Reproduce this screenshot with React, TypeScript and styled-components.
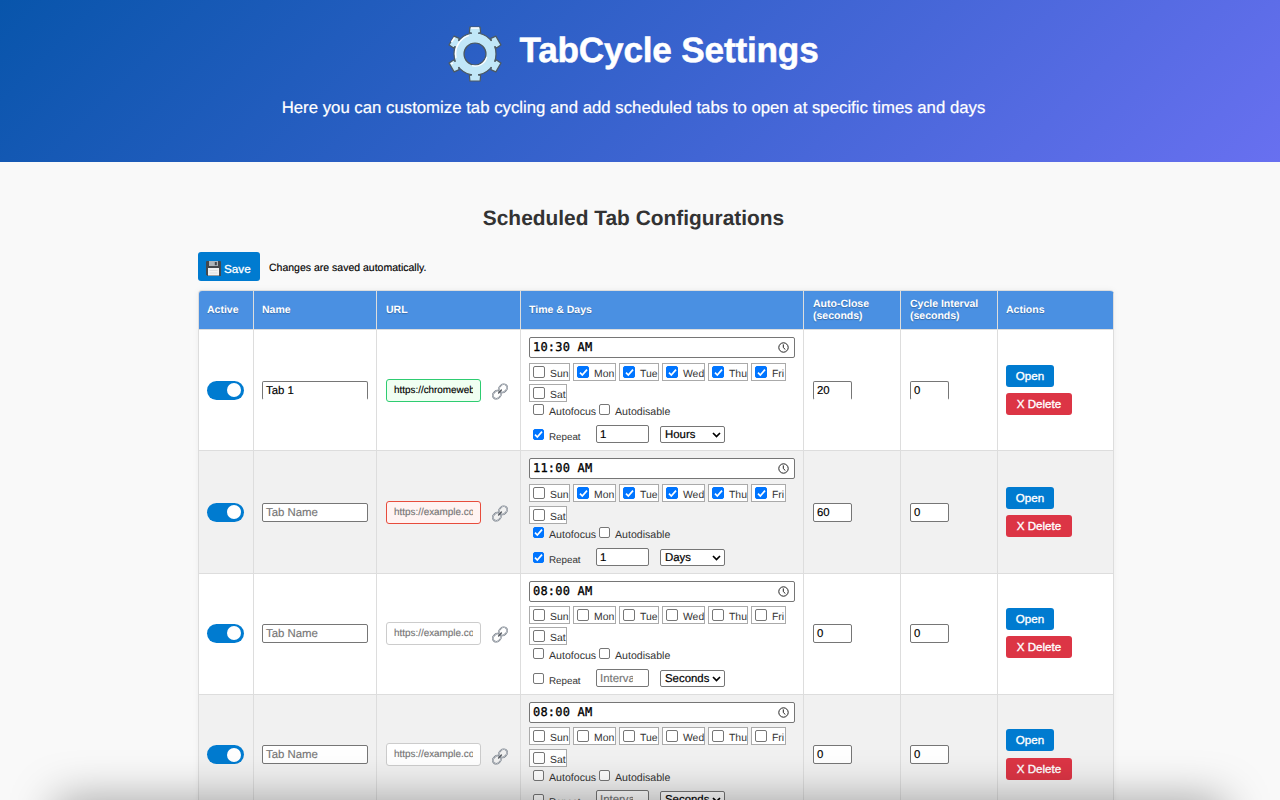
import React from "react";
import styled, { createGlobalStyle, css } from "styled-components";

const GlobalStyle = createGlobalStyle`
  * { box-sizing: border-box; }
  html, body { margin: 0; height: 800px; overflow: hidden; }
  body {
    background: #f9f9f9;
    font-family: "Liberation Sans", Arial, sans-serif;
    color: #000;
    text-rendering: geometricPrecision;
  }
`;

const Page = styled.div`
  position: relative;
  width: 1280px;
  height: 800px;
  overflow: hidden;
`;

const Header = styled.header`
  height: 162px;
  padding: 25px 13px 0 0;
  display: flex;
  flex-direction: column;
  align-items: center;
  color: #fff;
  background: linear-gradient(135deg, #0855ab 0%, #6870f0 100%);
`;

const TitleRow = styled.div`
  display: flex;
  align-items: flex-start;
  height: 60px;
  gap: 17px;
`;

const Title = styled.h1`
  margin: 5px 0 0;
  font-size: 35.2px;
  line-height: 41px;
  letter-spacing: -0.2px;
  white-space: nowrap;
  -webkit-text-stroke: 0.5px #fff;
`;

const Subtitle = styled.p`
  margin: 13px 0 0;
  font-size: 16.78px;
  line-height: 20px;
  white-space: nowrap;
  -webkit-text-stroke: 0.2px #fff;
`;

const Main = styled.main`
  padding-left: 198px;
`;

const SectionTitle = styled.h2`
  margin: 0;
  padding: 44px 0 21px;
  width: 871px;
  text-align: center;
  font-size: 20.9px;
  line-height: 25px;
  color: #333;
`;

const SaveRow = styled.div`
  display: flex;
  align-items: center;
  height: 29px;
  gap: 9px;
  margin-bottom: 9px;
`;

const SaveButton = styled.button`
  display: flex;
  align-items: center;
  width: 62px;
  height: 29px;
  padding: 3px 0 0 8px;
  gap: 3px;
  border: 0;
  border-radius: 3px;
  background: #007bd0;
  color: #fff;
  font: 11.7px/13px "Liberation Sans", Arial, sans-serif;
  -webkit-text-stroke: 0.3px #fff;
`;

const SaveNote = styled.span`
  padding-top: 2px;
  font-size: 10.5px;
  -webkit-text-stroke: 0.15px #000;
`;

const Table = styled.div`
  width: 916px;
  border: 1px solid #ddd;
  border-right: 0;
  border-radius: 4px 4px 0 0;
  box-shadow: 0 0 6px rgba(0, 0, 0, 0.05);
  overflow: hidden;
`;

const Cell = styled.div<{ $inset?: number }>`
  display: flex;
  align-items: center;
  padding-left: ${(p) => p.$inset ?? 8}px;
  border-right: 1px solid #ddd;
  border-bottom: 1px solid #ddd;
`;

const Row = styled.div<{ $height: number; $striped?: boolean; $head?: boolean; $raised?: boolean }>`
  display: grid;
  grid-template-columns: 55px 123px 144px 283px 97px 97px 116px;
  height: ${(p) => p.$height}px;
  background: ${(p) => (p.$head ? "#4a90e2" : p.$striped ? "#f1f1f1" : "#fff")};
  ${Cell} {
    padding-bottom: ${(p) => (p.$raised ? 2 : 0)}px;
  }
`;

const HeadCell = styled(Cell)`
  font-size: 10.5px;
  line-height: 12px;
  font-weight: bold;
  color: #fff;
  white-space: pre-line;
  text-shadow: 0 1px 1px rgba(0, 0, 0, 0.25);
`;

const Actions = styled.div<{ $top: number; $gap: number }>`
  align-self: flex-start;
  display: flex;
  flex-direction: column;
  padding-top: ${(p) => p.$top}px;
  gap: ${(p) => p.$gap}px;
`;

const Toggle = styled.span`
  display: flex;
  justify-content: flex-end;
  align-items: center;
  width: 37px;
  height: 19px;
  padding-right: 3px;
  border-radius: 10px;
  background: #007bd0;
`;

const Knob = styled.span`
  width: 14px;
  height: 14px;
  border-radius: 50%;
  background: #fff;
`;

const Field = styled.div<{ $width: number; $muted?: boolean; $open?: boolean; $height?: number }>`
  width: ${(p) => p.$width}px;
  height: ${(p) => p.$height ?? 19}px;
  padding: 0 3px;
  border: 1px solid #767676;
  border-radius: 2px;
  background: #fff;
  color: ${(p) => (p.$muted ? "#757575" : "#000")};
  font-size: 11.4px;
  line-height: ${(p) => p.$height ?? 19}px;
  white-space: nowrap;
  overflow: hidden;
  -webkit-text-stroke: 0.15px;
  ${(p) => p.$open && css`border-bottom-color: transparent;`}
`;

type UrlState = "ok" | "bad" | "idle";

const urlColors = {
  ok: css`border-color: #2ecc71; background: #f0fff2; color: #000;`,
  bad: css`border-color: #e74c3c; background: #fff3f2; color: #757575;`,
  idle: css`border-color: #ccc; background: #fff; color: #757575;`,
};

const UrlField = styled.div<{ $state: UrlState }>`
  width: 95px;
  height: 23px;
  padding: 0 7px;
  margin: 0 11px 0 1px;
  border: 1px solid;
  border-radius: 3px;
  font-size: 9.9px;
  line-height: 22px;
  -webkit-text-stroke: 0.15px;
  ${(p) => urlColors[p.$state]}
`;

const UrlText = styled.div`
  overflow: hidden;
  white-space: nowrap;
`;

const Schedule = styled.div`
  align-self: flex-start;
  padding-top: 7px;
`;

const TimeField = styled.div`
  display: flex;
  align-items: center;
  justify-content: space-between;
  width: 266px;
  height: 21px;
  padding: 0 5px 0 3px;
  border: 1px solid #767676;
  border-radius: 2px;
  background: #fff;
  font-family: "DejaVu Sans Mono", monospace;
  font-size: 12px;
  line-height: 17px;
  letter-spacing: 0.2px;
  -webkit-text-stroke: 0.3px #000;
`;

const Days = styled.div<{ $top: number; $gap: number }>`
  display: flex;
  flex-wrap: wrap;
  gap: ${(p) => p.$gap}px 3px;
  padding-top: ${(p) => p.$top}px;
  width: 268px;
`;

const Day = styled.label<{ $width: number }>`
  display: flex;
  width: ${(p) => p.$width}px;
  height: 18px;
  padding: 2px 0 0 3px;
  gap: 5px;
  border: 1px solid #aaa;
  background: #fff;
  color: #333;
  font-size: 10.4px;
  line-height: 18px;
  white-space: nowrap;
`;

const Box = styled.span<{ $on?: boolean; $size?: number }>`
  display: inline-flex;
  align-items: center;
  justify-content: center;
  flex: none;
  width: ${(p) => p.$size ?? 11}px;
  height: ${(p) => p.$size ?? 11}px;
  border: 1px solid ${(p) => (p.$on ? "#0075ff" : "#767676")};
  border-radius: 2px;
  background: ${(p) => (p.$on ? "#0075ff" : "#fff")};
`;

const Options = styled.div<{ $top: number }>`
  display: flex;
  height: ${(p) => p.$top + 16}px;
  padding: ${(p) => p.$top}px 0 0 4px;
  font-size: 10.6px;
  line-height: 17px;
  color: #333;
`;

const OptionLabel = styled.span<{ $width: number }>`
  width: ${(p) => p.$width}px;
  padding-left: 5px;
  white-space: nowrap;
`;

const RepeatRow = styled.div<{ $top: number }>`
  display: flex;
  align-items: flex-start;
  padding: ${(p) => p.$top}px 0 0 4px;
`;

const RepeatBox = styled.div`
  display: flex;
  width: 63px;
  padding-top: 4px;
  gap: 5px;
  font-size: 9.8px;
  line-height: 17px;
  color: #333;
`;

const IntervalText = styled.div<{ $clip: boolean }>`
  width: ${(p) => (p.$clip ? "33px" : "auto")};
  overflow: hidden;
`;

const Select = styled.div`
  display: flex;
  align-items: center;
  justify-content: space-between;
  width: 65px;
  height: 17px;
  margin: 1px 0 0 11px;
  padding: 0 3px 0 4px;
  border: 1px solid #767676;
  border-radius: 2px;
  background: #fff;
  font-size: 11.4px;
  -webkit-text-stroke: 0.2px #000;
`;

const ActionButton = styled.button<{ $danger?: boolean }>`
  width: ${(p) => (p.$danger ? 66 : 48)}px;
  height: 22px;
  padding: 0 0 2px;
  border: 0;
  border-radius: 3px;
  background: ${(p) => (p.$danger ? "#dc3545" : "#007bd0")};
  color: #fff;
  font: 11.6px "Liberation Sans", Arial, sans-serif;
  -webkit-text-stroke: 0.35px #fff;
`;

const BottomShade = styled.div`
  position: absolute;
  left: 70px;
  right: 70px;
  top: 814px;
  height: 40px;
  box-shadow: 0 0 46px 14px rgba(0, 0, 0, 0.36);
`;

const Check = ({ on, size }: { on?: boolean; size?: number }) => (
  <Box $on={on} $size={size}>
    {on && (
      <svg width="9" height="9" viewBox="0 0 9 9" fill="none" stroke="#fff" strokeWidth="1.7">
        <path d="M1 4.7 3.3 7 8 1.6" />
      </svg>
    )}
  </Box>
);

const toothAngles = [0, 60, 120, 180, 240, 300];

const Gear = () => (
  <svg width="54" height="58" viewBox="-27 -29 54 58">
    <g fill="#c1e7f8" stroke="#4d5960" strokeWidth="1.2" strokeLinejoin="round">
      {toothAngles.map((a) => (
        <path key={a} transform={`rotate(${a})`} d="M-3.6-18-3.6-21-5.6-21.5-5.1-27 5.1-27 5.6-21.5 3.6-21 3.6-18Z" />
      ))}
      <path fillRule="evenodd" d="M0-21A21 21 0 1 1 0 21 21 21 0 1 1 0-21ZM0-11A11 11 0 1 0 0 11 11 11 0 1 0 0-11Z" />
    </g>
    <g fill="#c1e7f8">
      {toothAngles.map((a) => (
        <rect key={a} x="-3" y="-22.3" width="6" height="5" transform={`rotate(${a})`} />
      ))}
    </g>
    <path d="M-19 4A19.5 19.5 0 0 1-6-18.6M-4-26 4-26M-23.5-12-20.5-16.5M-24 10-22 9" fill="none" stroke="#fff" strokeWidth="1.5" />
    <path d="M11.8 3A12 12 0 0 1-3 11.6" fill="none" stroke="#fff" strokeWidth="1.2" />
  </svg>
);

const Floppy = () => (
  <svg width="15" height="15" viewBox="0 0 15 15">
    <path d="M0 1Q0 0 1 0H14Q15 0 15 1V15H1.5L0 13.5Z" fill="#45484d" />
    <rect x="3" width="9" height="5" fill="#aeb4b9" />
    <rect x="8.8" y="1" width="2" height="3.2" fill="#44484e" />
    <rect x="2" y="7" width="11" height="7.5" fill="#f2f2f2" />
    <path d="M3.5 9.5h8M3.5 12h8" stroke="#d5d7d9" strokeWidth=".7" />
  </svg>
);

const ChainSvg = styled.svg<{ $lowered?: boolean }>`
  margin-top: ${(p) => (p.$lowered ? 3 : 2)}px;
`;

const Chain = ({ lowered }: { lowered?: boolean }) => (
  <ChainSvg $lowered={lowered} width="16" height="17" viewBox="0 0 16 17" fill="none">
    <g transform="rotate(-46 8 8.5)">
      <rect x="-.8" y="5" width="8.8" height="7" rx="3.5" stroke="#747b84" strokeWidth="1.6" />
      <rect x="-.8" y="5" width="8.8" height="7" rx="3.5" stroke="#c9ced5" strokeWidth=".8" />
      <rect x="8" y="5" width="8.8" height="7" rx="3.5" stroke="#747b84" strokeWidth="1.6" />
      <rect x="8" y="5" width="8.8" height="7" rx="3.5" stroke="#c9ced5" strokeWidth=".8" />
      <path d="M6 8.5h4" stroke="#55595f" strokeWidth="1.4" strokeLinecap="round" />
    </g>
  </ChainSvg>
);

const Clock = () => (
  <svg width="11" height="11" viewBox="0 0 11 11" fill="none" stroke="#222" strokeWidth="1">
    <circle cx="5.5" cy="5.5" r="4.7" />
    <path d="M5.3 2.4V5.6L7.4 7.6" />
  </svg>
);

const Chevron = () => (
  <svg width="9" height="6" viewBox="0 0 9 6" fill="none" stroke="#000" strokeWidth="1.7">
    <path d="M1 1 4.5 4.5 8 1" />
  </svg>
);

const dayWidths: [string, number][] = [
  ["Sun", 41], ["Mon", 43], ["Tue", 40], ["Wed", 43], ["Thu", 40], ["Fri", 35], ["Sat", 38],
];

interface Spacing {
  height: number;
  daysTop: number;
  daysGap: number;
  optionsTop: number;
  repeatTop: number;
  actionsTop: number;
  actionsGap: number;
  raised?: boolean;
}

interface TabConfig {
  name?: string;
  url?: string;
  urlState: UrlState;
  time: string;
  weekdays?: boolean;
  autofocus?: boolean;
  interval?: string;
  unit: string;
  autoClose: string;
  spacing: Spacing;
}

const tabs: TabConfig[] = [
  {
    name: "Tab 1", url: "https://chromewebstore", urlState: "ok", time: "10:30 AM", weekdays: true,
    interval: "1", unit: "Hours", autoClose: "20",
    spacing: { height: 121, daysTop: 5, daysGap: 3, optionsTop: 2, repeatTop: 5, actionsTop: 35, actionsGap: 6 },
  },
  {
    urlState: "bad", time: "11:00 AM", weekdays: true, autofocus: true,
    interval: "1", unit: "Days", autoClose: "60",
    spacing: { height: 123, daysTop: 5, daysGap: 4, optionsTop: 3, repeatTop: 5, actionsTop: 36, actionsGap: 6 },
  },
  {
    urlState: "idle", time: "08:00 AM", unit: "Seconds", autoClose: "0",
    spacing: { height: 121, daysTop: 4, daysGap: 3, optionsTop: 3, repeatTop: 5, actionsTop: 34, actionsGap: 6, raised: true },
  },
  {
    urlState: "idle", time: "08:00 AM", unit: "Seconds", autoClose: "0",
    spacing: { height: 122, daysTop: 4, daysGap: 4, optionsTop: 3, repeatTop: 4, actionsTop: 34, actionsGap: 7, raised: true },
  },
];

const headings: [string, number][] = [
  ["Active", 8], ["Name", 8], ["URL", 9], ["Time & Days", 8],
  ["Auto-Close\n(seconds)", 9], ["Cycle Interval\n(seconds)", 9], ["Actions", 8],
];

const TabRow = ({ tab, index }: { tab: TabConfig; index: number }) => {
  const s = tab.spacing;
  return (
    <Row $height={s.height} $striped={index % 2 === 1} $raised={s.raised}>
      <Cell><Toggle><Knob /></Toggle></Cell>
      <Cell><Field $width={106} $muted={!tab.name} $open={index === 0}>{tab.name ?? "Tab Name"}</Field></Cell>
      <Cell>
        <UrlField $state={tab.urlState}><UrlText>{tab.url ?? "https://example.com"}</UrlText></UrlField>
        <Chain lowered={s.raised} />
      </Cell>
      <Cell>
        <Schedule>
          <TimeField>{tab.time}<Clock /></TimeField>
          <Days $top={s.daysTop} $gap={s.daysGap}>
            {dayWidths.map(([day, width]) => (
              <Day key={day} $width={width}>
                <Check on={tab.weekdays && day !== "Sun" && day !== "Sat"} size={12} />
                {day}
              </Day>
            ))}
          </Days>
          <Options $top={s.optionsTop}>
            <Check on={tab.autofocus} />
            <OptionLabel $width={55}>Autofocus</OptionLabel>
            <Check />
            <OptionLabel $width={70}>Autodisable</OptionLabel>
          </Options>
          <RepeatRow $top={s.repeatTop}>
            <RepeatBox><Check on={!!tab.interval} />Repeat</RepeatBox>
            <Field $width={53} $height={18} $muted={!tab.interval}>
              <IntervalText $clip={!tab.interval}>{tab.interval ?? "Interval"}</IntervalText>
            </Field>
            <Select>{tab.unit}<Chevron /></Select>
          </RepeatRow>
        </Schedule>
      </Cell>
      <Cell $inset={9}><Field $width={39} $open={index === 0}>{tab.autoClose}</Field></Cell>
      <Cell $inset={9}><Field $width={39} $open={index === 0}>0</Field></Cell>
      <Cell>
        <Actions $top={s.actionsTop} $gap={s.actionsGap}>
          <ActionButton>Open</ActionButton>
          <ActionButton $danger>X Delete</ActionButton>
        </Actions>
      </Cell>
    </Row>
  );
};

export default function App() {
  return (
    <Page>
      <GlobalStyle />
      <Header>
        <TitleRow><Gear /><Title>TabCycle Settings</Title></TitleRow>
        <Subtitle>Here you can customize tab cycling and add scheduled tabs to open at specific times and days</Subtitle>
      </Header>
      <Main>
        <SectionTitle>Scheduled Tab Configurations</SectionTitle>
        <SaveRow>
          <SaveButton><Floppy />Save</SaveButton>
          <SaveNote>Changes are saved automatically.</SaveNote>
        </SaveRow>
        <Table>
          <Row $height={39} $head>
            {headings.map(([text, inset]) => <HeadCell key={text} $inset={inset}>{text}</HeadCell>)}
          </Row>
          {tabs.map((tab, i) => <TabRow key={i} tab={tab} index={i} />)}
        </Table>
      </Main>
      <BottomShade />
    </Page>
  );
}
